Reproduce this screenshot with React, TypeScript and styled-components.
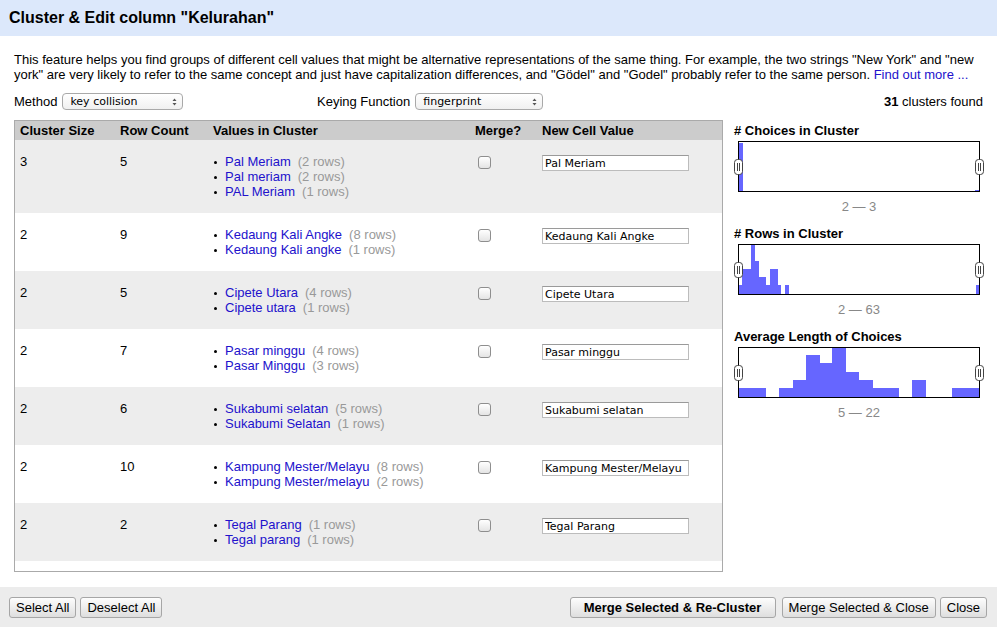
import React from "react";
import styled, { createGlobalStyle } from "styled-components";

const GlobalStyle = createGlobalStyle`
  html, body {
    margin: 0;
    padding: 0;
    background: #fff;
  }
  body {
    font-family: "Liberation Sans", Arial, sans-serif;
    font-size: 13px;
    color: #000;
  }
`;

interface Cluster {
  size: number;
  count: number;
  values: [string, number][];
}

const clusters: Cluster[] = [
  { size: 3, count: 5, values: [["Pal Meriam", 2], ["Pal meriam", 2], ["PAL Meriam", 1]] },
  { size: 2, count: 9, values: [["Kedaung Kali Angke", 8], ["Kedaung Kali angke", 1]] },
  { size: 2, count: 5, values: [["Cipete Utara", 4], ["Cipete utara", 1]] },
  { size: 2, count: 7, values: [["Pasar minggu", 4], ["Pasar Minggu", 3]] },
  { size: 2, count: 6, values: [["Sukabumi selatan", 5], ["Sukabumi Selatan", 1]] },
  { size: 2, count: 10, values: [["Kampung Mester/Melayu", 8], ["Kampung Mester/melayu", 2]] },
  { size: 2, count: 2, values: [["Tegal Parang", 1], ["Tegal parang", 1]] },
];

// [x0, x1, height] inside a 240x49 chart
const facets = [
  {
    title: "# Choices in Cluster",
    range: "2 — 3",
    bars: [[0, 4, 48], [236, 240, 1]],
  },
  {
    title: "# Rows in Cluster",
    range: "2 — 63",
    bars: [
      [0, 3, 9], [3, 12, 25], [12, 16, 49], [16, 20, 33], [20, 27, 17],
      [27, 31, 9], [31, 39, 25], [39, 42, 9], [46, 50, 9], [237, 240, 9],
    ],
  },
  {
    title: "Average Length of Choices",
    range: "5 — 22",
    bars: [
      [0, 27, 9], [40, 54, 9], [54, 67, 17], [67, 81, 42], [81, 93, 34],
      [93, 107, 49], [107, 120, 25], [120, 134, 17], [134, 160, 9],
      [173, 187, 17], [213, 240, 9],
    ],
  },
];

const COLS = "100px 93px 262px 67px 1fr";

const Page = styled.div`
  width: 997px;
  height: 627px;
  display: flex;
  flex-direction: column;
  overflow: hidden;
`;

const Header = styled.div`
  height: 36px;
  background: #dce8fb;
  display: flex;
  align-items: center;
  padding-left: 9px;
  font-size: 16px;
  font-weight: bold;
`;

const Body = styled.div`
  padding: 16px 14px 0 14px;
  flex: 1;
`;

const Description = styled.p`
  margin: 0;
  line-height: 15px;
  a {
    color: #2211cc;
    text-decoration: none;
  }
`;

const Controls = styled.div`
  margin-top: 11px;
  height: 17px;
  display: grid;
  grid-template-columns: 303px 1fr auto;
  align-items: center;
`;

const ControlGroup = styled.div`
  display: flex;
  align-items: center;
  gap: 5px;
`;

const SelectBox = styled.div<{ $w: number }>`
  width: ${(p) => p.$w}px;
  height: 17px;
  box-sizing: border-box;
  border: 1px solid #a9a9a9;
  border-radius: 4px;
  background: linear-gradient(#ffffff, #f0f0f0);
  display: flex;
  align-items: center;
  justify-content: space-between;
  padding: 0 5px 0 7px;
  font-family: "DejaVu Sans", sans-serif;
  font-size: 11px;
  svg {
    display: block;
  }
`;

const Found = styled.div`
  b {
    font-weight: bold;
  }
`;

const Main = styled.div`
  margin-top: 10px;
  display: flex;
  gap: 11px;
`;

const Table = styled.div`
  flex: 0 0 709px;
  height: 452px;
  box-sizing: border-box;
  border: 1px solid #aaa;
  display: flex;
  flex-direction: column;
`;

const HeadRow = styled.div`
  height: 19px;
  background: #cccccc;
  display: grid;
  grid-template-columns: ${COLS};
  align-items: center;
  font-weight: bold;
  > div {
    padding-left: 5px;
  }
`;

const Scroll = styled.div`
  flex: 1;
  overflow: hidden;
`;

const Row = styled.div<{ $odd: boolean }>`
  display: grid;
  grid-template-columns: ${COLS};
  align-items: start;
  background: ${(p) => (p.$odd ? "#ededed" : "#fff")};
  padding: 14px 0;
  line-height: 15px;
  > div {
    padding-left: 5px;
  }
`;

const ValueList = styled.ul`
  list-style: none;
  margin: 0;
  padding: 0;
  li {
    display: flex;
    align-items: center;
    height: 15px;
    white-space: nowrap;
  }
  li::before {
    content: "";
    flex: 0 0 auto;
    width: 3px;
    height: 3px;
    border-radius: 50%;
    background: #000;
    margin: 1px 8px 0 1px;
  }
  a {
    color: #2211cc;
    text-decoration: none;
  }
  span {
    color: #999;
    margin-left: 7px;
  }
`;

const Check = styled.input`
  display: block;
  appearance: none;
  margin: 2px 0 0 3px;
  width: 13px;
  height: 13px;
  box-sizing: border-box;
  border: 1px solid #8e8e8e;
  border-radius: 3px;
  background: linear-gradient(#ffffff, #e4e4e4);
`;

const ValueInput = styled.input`
  display: block;
  margin: 1px 0 0 0;
  width: 147px;
  height: 16px;
  box-sizing: border-box;
  border: 1px solid #bcbcbc;
  border-top-color: #9a9a9a;
  padding: 0 2px;
  font-family: "DejaVu Sans", sans-serif;
  font-size: 11px;
  color: #000;
  outline: none;
`;

const Side = styled.div`
  flex: 1;
  min-width: 0;
  padding-top: 3px;
`;

const Facet = styled.div`
  margin-bottom: 12px;
`;

const FacetTitle = styled.div`
  font-weight: bold;
  line-height: 15px;
`;

const Chart = styled.div`
  position: relative;
  margin: 3px 0 0 4px;
  width: 242px;
  height: 51px;
  box-sizing: border-box;
  border: 1px solid #000;
  svg.bars {
    display: block;
  }
`;

const Handle = styled.svg<{ $side: "left" | "right" }>`
  position: absolute;
  top: 17px;
  ${(p) => (p.$side === "left" ? "left: -5px;" : "right: -5px;")}
`;

const Range = styled.div`
  margin: 7px 0 0 4px;
  width: 242px;
  text-align: center;
  color: #888;
  line-height: 15px;
`;

const Footer = styled.div`
  height: 40px;
  background: #ececec;
  display: flex;
  align-items: center;
  justify-content: space-between;
  padding: 0 10px 0 9px;
`;

const ButtonGroup = styled.div`
  display: flex;
  gap: 4px;
`;

const Button = styled.button<{ $bold?: boolean; $w?: number }>`
  height: 21px;
  padding: 0 6px;
  ${(p) => (p.$w ? `width: ${p.$w}px; margin-right: 2px;` : "")}
  border: 1px solid #a6a6a6;
  border-radius: 3px;
  background: linear-gradient(#fdfdfd, #dedede);
  font-family: "Liberation Sans", Arial, sans-serif;
  font-size: 13px;
  font-weight: ${(p) => (p.$bold ? "bold" : "normal")};
  color: #000;
`;

const Arrows = () => (
  <svg width="5" height="8" viewBox="0 0 5 8">
    <path d="M0.5 3 L2.5 0.5 L4.5 3 Z M0.5 5 L2.5 7.5 L4.5 5 Z" fill="#555" />
  </svg>
);

const HandleIcon = ({ side }: { side: "left" | "right" }) => (
  <Handle $side={side} width="9" height="16" viewBox="0 0 9 16">
    <rect x="0.5" y="0.5" width="8" height="15" rx="3" fill="#fff" stroke="#444" />
    <line x1="3.5" y1="4" x2="3.5" y2="12" stroke="#444" />
    <line x1="5.5" y1="4" x2="5.5" y2="12" stroke="#444" />
  </Handle>
);

const App: React.FC = () => (
  <Page>
    <GlobalStyle />
    <Header>Cluster &amp; Edit column "Kelurahan"</Header>
    <Body>
      <Description>
        This feature helps you find groups of different cell values that might be alternative
        representations of the same thing. For example, the two strings "New York" and "new
        york" are very likely to refer to the same concept and just have capitalization
        differences, and "Gödel" and "Godel" probably refer to the same person.{" "}
        <a href="#">Find out more ...</a>
      </Description>
      <Controls>
        <ControlGroup>
          Method
          <SelectBox $w={121}>
            key collision
            <Arrows />
          </SelectBox>
        </ControlGroup>
        <ControlGroup>
          Keying Function
          <SelectBox $w={128}>
            fingerprint
            <Arrows />
          </SelectBox>
        </ControlGroup>
        <Found>
          <b>31</b> clusters found
        </Found>
      </Controls>
      <Main>
        <Table>
          <HeadRow>
            <div>Cluster Size</div>
            <div>Row Count</div>
            <div>Values in Cluster</div>
            <div>Merge?</div>
            <div>New Cell Value</div>
          </HeadRow>
          <Scroll>
            {clusters.map((c, i) => (
              <Row key={i} $odd={i % 2 === 0}>
                <div>{c.size}</div>
                <div>{c.count}</div>
                <div>
                  <ValueList>
                    {c.values.map(([v, n]) => (
                      <li key={v}>
                        <a href="#">{v}</a>
                        <span>({n} rows)</span>
                      </li>
                    ))}
                  </ValueList>
                </div>
                <div>
                  <Check type="checkbox" />
                </div>
                <div>
                  <ValueInput defaultValue={c.values[0][0]} />
                </div>
              </Row>
            ))}
          </Scroll>
        </Table>
        <Side>
          {facets.map((f) => (
            <Facet key={f.title}>
              <FacetTitle>{f.title}</FacetTitle>
              <Chart>
                <svg className="bars" width="240" height="49" viewBox="0 0 240 49">
                  {f.bars.map(([x0, x1, h], j) => (
                    <rect key={j} x={x0} y={49 - h} width={x1 - x0} height={h} fill="#6666ff" />
                  ))}
                </svg>
                <HandleIcon side="left" />
                <HandleIcon side="right" />
              </Chart>
              <Range>{f.range}</Range>
            </Facet>
          ))}
        </Side>
      </Main>
    </Body>
    <Footer>
      <ButtonGroup>
        <Button>Select All</Button>
        <Button>Deselect All</Button>
      </ButtonGroup>
      <ButtonGroup>
        <Button $bold $w={206}>Merge Selected &amp; Re-Cluster</Button>
        <Button>Merge Selected &amp; Close</Button>
        <Button>Close</Button>
      </ButtonGroup>
    </Footer>
  </Page>
);

export default App;
